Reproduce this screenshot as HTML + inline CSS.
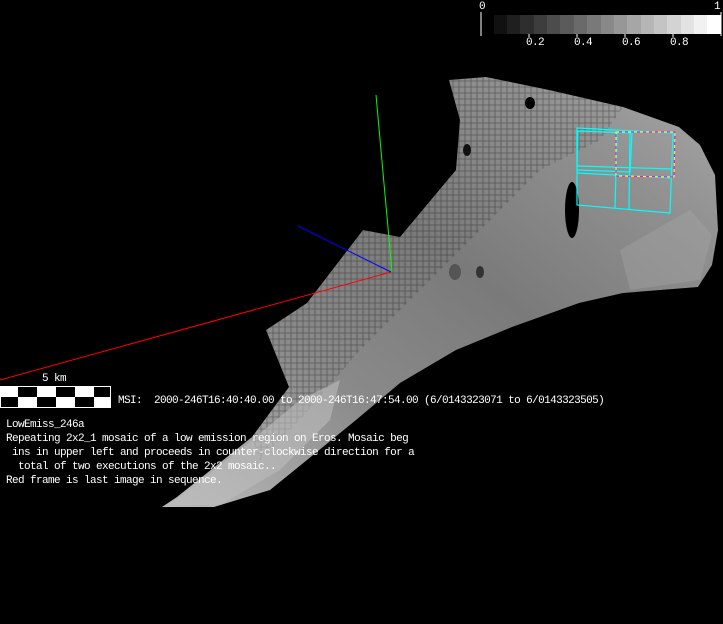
<!DOCTYPE html>
<html><head><meta charset="utf-8"><style>
html,body{margin:0;padding:0;background:#000;width:723px;height:624px;overflow:hidden}
.t{position:absolute;font-family:"Liberation Mono",monospace;font-size:11px;letter-spacing:-0.6px;color:#fff;white-space:pre;line-height:14px}
</style></head><body>
<svg width="723" height="624" style="position:absolute;left:0;top:0">
<defs>
<linearGradient id="g" x1="0" y1="1" x2="1" y2="0">
<stop offset="0" stop-color="#bbb"/><stop offset="0.3" stop-color="#8a8a8a"/><stop offset="0.55" stop-color="#7a7a7a"/><stop offset="0.8" stop-color="#909090"/><stop offset="1" stop-color="#a8a8a8"/>
</linearGradient>
<pattern id="m" width="6" height="6" patternUnits="userSpaceOnUse">
<path d="M0,3 L6,3 M3,0 L3,6" stroke="#000" stroke-width="0.8" opacity="0.35"/>
</pattern>
</defs>
<polygon fill="url(#g)" points="449,80 486,77 549,90 623,107 679,127 700,145 715,175 718,230 712,265 698,287 623,293 579,303 512,327 456,350 400,383 356,420 307,460 270,490 214,507 162,507 177,497 252,437 289,387 266,330 307,303 363,230 400,237 456,170 460,120"/>
<polygon fill="url(#m)" points="449,80 486,77 549,90 623,107 600,140 540,170 480,230 420,290 360,350 300,420 260,460 252,437 289,387 266,330 307,303 363,230 400,237 456,170 460,120"/>
<polygon fill="#bdbdbd" opacity="0.6" points="170,505 240,450 300,400 340,380 330,420 280,470 220,505"/>
<polygon fill="#aaa" opacity="0.35" points="620,250 690,210 712,235 700,280 630,290"/>
<ellipse cx="572" cy="210" rx="7" ry="28" fill="#000"/>
<ellipse cx="530" cy="103" rx="5" ry="6" fill="#000"/>
<ellipse cx="467" cy="150" rx="4" ry="6" fill="#111"/>
<ellipse cx="455" cy="272" rx="6" ry="8" fill="#555"/>
<ellipse cx="480" cy="272" rx="4" ry="6" fill="#333"/>
<line x1="0" y1="380" x2="391" y2="272" stroke="#f00" stroke-width="1"/>
<line x1="376" y1="95" x2="392" y2="272" stroke="#0f0" stroke-width="1"/>
<line x1="298" y1="226" x2="391" y2="272" stroke="#00f" stroke-width="1"/>
<g fill="none" stroke="#0ff" stroke-width="1.2">
<polygon points="577,128 673,133 670,213 577,205"/>
<polygon points="578,131 632,133 630,172 577,170"/>
<line x1="630" y1="131" x2="629" y2="210"/>
<line x1="617" y1="132" x2="615" y2="208"/>
<line x1="577" y1="166" x2="672" y2="169"/>
<line x1="577" y1="173" x2="672" y2="178"/>
</g>
<polygon fill="none" stroke="#ff0" stroke-dasharray="3,3" points="616,132 675,132 674,177 616,176"/>
<polygon fill="none" stroke="#f0f" stroke-dasharray="3,3" stroke-dashoffset="3" points="616,132 675,132 674,177 616,176"/>
<rect x="0" y="386" width="111" height="22" fill="#fff"/>
<g fill="#000">
<rect x="18" y="387" width="19" height="10"/><rect x="56" y="387" width="19" height="10"/><rect x="94" y="387" width="16" height="10"/>
<rect x="1" y="397" width="17" height="10"/><rect x="37" y="397" width="19" height="10"/><rect x="75" y="397" width="19" height="10"/>
</g>
<line x1="481" y1="12" x2="481" y2="36" stroke="#fff"/>
<line x1="721" y1="12" x2="721" y2="36" stroke="#fff"/>
<g>
<rect x="494" y="15" width="14" height="19" fill="#111"/><rect x="507" y="15" width="14" height="19" fill="#1f1f1f"/><rect x="520" y="15" width="14" height="19" fill="#2e2e2e"/><rect x="534" y="15" width="14" height="19" fill="#3d3d3d"/><rect x="547" y="15" width="14" height="19" fill="#4c4c4c"/><rect x="560" y="15" width="14" height="19" fill="#5b5b5b"/><rect x="574" y="15" width="14" height="19" fill="#6a6a6a"/><rect x="587" y="15" width="14" height="19" fill="#797979"/><rect x="601" y="15" width="14" height="19" fill="#888"/><rect x="614" y="15" width="14" height="19" fill="#979797"/><rect x="627" y="15" width="14" height="19" fill="#a6a6a6"/><rect x="641" y="15" width="14" height="19" fill="#b5b5b5"/><rect x="654" y="15" width="14" height="19" fill="#c4c4c4"/><rect x="667" y="15" width="14" height="19" fill="#d3d3d3"/><rect x="681" y="15" width="14" height="19" fill="#e2e2e2"/><rect x="694" y="15" width="14" height="19" fill="#f1f1f1"/><rect x="707" y="15" width="14" height="19" fill="#fff"/>
</g>
<g stroke="#fff"><line x1="529" y1="34" x2="529" y2="37"/><line x1="577" y1="34" x2="577" y2="37"/><line x1="625" y1="34" x2="625" y2="37"/><line x1="673" y1="34" x2="673" y2="37"/></g>
</svg>
<div class="t" style="left:479px;top:0px">0</div>
<div class="t" style="left:714px;top:0px">1</div>
<div class="t" style="left:526px;top:36px">0.2</div>
<div class="t" style="left:574px;top:36px">0.4</div>
<div class="t" style="left:622px;top:36px">0.6</div>
<div class="t" style="left:670px;top:36px">0.8</div>
<div class="t" style="left:42px;top:372px">5 km</div>
<div class="t" style="left:118px;top:394px">MSI:  2000-246T16:40:40.00 to 2000-246T16:47:54.00 (6/0143323071 to 6/0143323505)</div>
<div class="t" style="left:6px;top:418px">LowEmiss_246a
Repeating 2x2_1 mosaic of a low emission region on Eros. Mosaic beg
 ins in upper left and proceeds in counter-clockwise direction for a
  total of two executions of the 2x2 mosaic..
Red frame is last image in sequence.</div>
</body></html>
